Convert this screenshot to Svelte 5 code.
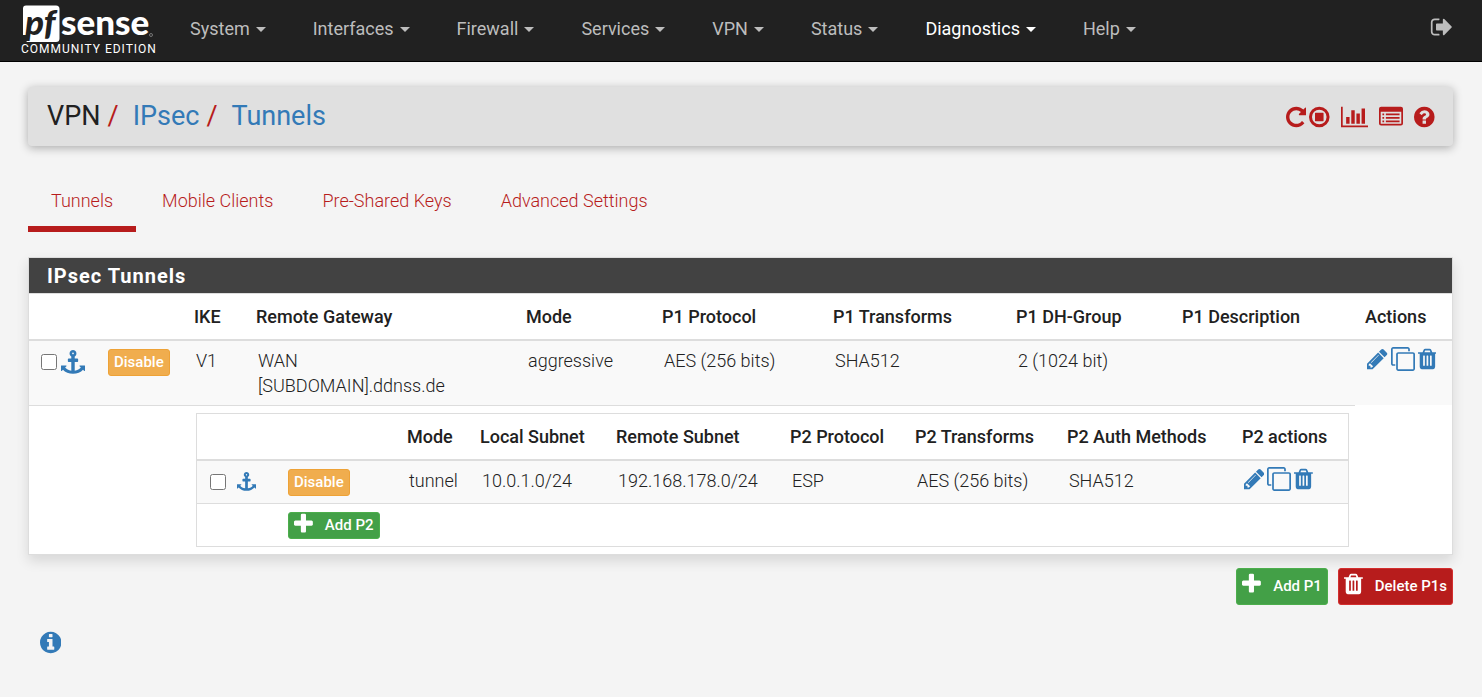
<script>
  const menus = ['System', 'Interfaces', 'Firewall', 'Services', 'VPN', 'Status', 'Diagnostics', 'Help'];
  const tabs = ['Tunnels', 'Mobile Clients', 'Pre-Shared Keys', 'Advanced Settings'];

  const p1Columns = [
    ['', 67], ['', 88], ['IKE', 62], ['Remote Gateway', 270], ['Mode', 136], ['P1 Protocol', 171],
    ['P1 Transforms', 183], ['P1 DH-Group', 166], ['P1 Description', 183], ['Actions', 97]
  ];
  const p2Columns = [
    ['', 79], ['', 121], ['Mode', 73], ['Local Subnet', 136], ['Remote Subnet', 174],
    ['P2 Protocol', 125], ['P2 Transforms', 152], ['P2 Auth Methods', 175], ['P2 actions', 116]
  ];
  const share = (columns, width) => (width / columns.reduce((sum, c) => sum + c[1], 0)) * 100;

  const disc = 'M1664 896q0 209-103 385.500t-279.500 279.500-385.500 103-385.500-103-279.500-279.500-103-385.500 103-385.500 279.500-279.500 385.500-103 385.500 103 279.500 279.500 103 385.500z';
  const icons = {
    pencil: ['128 0 1536 1792', 'M491 1536l91-91-235-235-91 91v107h128v128h107zm523-928q0-22-22-22-10 0-17 7l-542 542q-7 7-7 17 0 22 22 22 10 0 17-7l542-542q7-7 7-17zm-54-192l416 416-832 832h-416v-416zm683 96q0 53-37 90l-166 166-416-416 166-165q36-38 90-38 53 0 91 38l235 234q37 39 37 91z'],
    clone: ['0 0 1792 1792', 'M1664 1632v-1088q0-13-9.500-22.500t-22.500-9.500h-1088q-13 0-22.500 9.500t-9.500 22.500v1088q0 13 9.500 22.500t22.500 9.500h1088q13 0 22.500-9.500t9.500-22.500zm128-1088v1088q0 66-47 113t-113 47h-1088q-66 0-113-47t-47-113v-1088q0-66 47-113t113-47h1088q66 0 113 47t47 113zm-384-384v160h-128v-160q0-13-9.500-22.500t-22.500-9.500h-1088q-13 0-22.500 9.500t-9.500 22.500v1088q0 13 9.500 22.500t22.500 9.500h160v128h-160q-66 0-113-47t-47-113v-1088q0-66 47-113t113-47h1088q66 0 113 47t47 113z'],
    trash: ['192 0 1408 1792', 'M704 1376v-704q0-14-9-23t-23-9h-64q-14 0-23 9t-9 23v704q0 14 9 23t23 9h64q14 0 23-9t9-23zm256 0v-704q0-14-9-23t-23-9h-64q-14 0-23 9t-9 23v704q0 14 9 23t23 9h64q14 0 23-9t9-23zm256 0v-704q0-14-9-23t-23-9h-64q-14 0-23 9t-9 23v704q0 14 9 23t23 9h64q14 0 23-9t9-23zm-544-992h448l-48-117q-7-9-17-11h-317q-10 2-17 11zm928 32v64q0 14-9 23t-23 9h-96v948q0 83-47 143.500t-113 60.500h-832q-66 0-113-58.500t-47-141.500v-952h-96q-14 0-23-9t-9-23v-64q0-14 9-23t23-9h309l70-167q15-37 54-63t79-26h320q40 0 79 26t54 63l70 167h309q14 0 23 9t9 23z'],
    plus: ['192 0 1408 1792', 'M1600 736v192q0 40-28 68t-68 28h-416v416q0 40-28 68t-68 28h-192q-40 0-68-28t-28-68v-416h-416q-40 0-68-28t-28-68v-192q0-40 28-68t68-28h416v-416q0-40 28-68t68-28h192q40 0 68 28t28 68v416h416q40 0 68 28t28 68z'],
    anchor: ['0 0 1792 1792', 'M960 256q0-26-19-45t-45-19-45 19-19 45 19 45 45 19 45-19 19-45zm832 928v352q0 22-20 30-8 2-12 2-12 0-23-9l-93-93q-119 143-318.500 226.500t-429.500 83.500-429.500-83.500-318.500-226.500l-93 93q-9 9-23 9-4 0-12-2-20-8-20-30v-352q0-14 9-23t23-9h352q22 0 30 20 8 19-7 35l-100 100q67 91 189.500 153.500t271.500 82.500v-647h-192q-26 0-45-19t-19-45v-128q0-26 19-45t45-19h192v-163q-58-34-93-92.500t-35-128.500q0-106 75-181t181-75 181 75 75 181q0 70-35 128.500t-93 92.500v163h192q26 0 45 19t19 45v128q0 26-19 45t-45 19h-192v647q149-20 271.500-82.500t189.500-153.500l-100-100q-15-16-7-35 8-20 30-20h352q14 0 23 9t9 23z'],
    info: ['128 0 1536 1792', 'M1152 1376v-160q0-14-9-23t-23-9h-96v-512q0-14-9-23t-23-9h-320q-14 0-23 9t-9 23v160q0 14 9 23t23 9h96v320h-96q-14 0-23 9t-9 23v160q0 14 9 23t23 9h448q14 0 23-9t9-23zm-128-896v-160q0-14-9-23t-23-9h-192q-14 0-23 9t-9 23v160q0 14 9 23t23 9h192q14 0 23-9t9-23z' + disc],
    help: ['128 0 1536 1792', 'M1024 1376v-192q0-14-9-23t-23-9h-192q-14 0-23 9t-9 23v192q0 14 9 23t23 9h192q14 0 23-9t9-23zm256-672q0-88-55.500-163t-138.500-116-170-41q-243 0-371 213-15 24 8 42l132 100q7 6 19 6 16 0 25-12 53-68 86-92 34-24 86-24 48 0 85.500 26t37.500 59q0 38-20 61t-68 45q-63 28-115.500 86.500t-52.500 125.500v36q0 14 9 23t23 9h192q14 0 23-9t9-23q0-19 21.500-49.500t54.500-49.500q32-18 49-28.500t46-35 44.500-48 28-60.500 12.500-81z' + disc],
    repeat: ['128 0 1536 1792', 'M1664 256v448q0 26-19 45t-45 19h-448q-42 0-59-40-17-39 14-69l138-138q-148-137-349-137-104 0-198.500 40.500t-163.500 109.500-109.500 163.500-40.500 198.500 40.500 198.500 109.500 163.500 163.500 109.500 198.500 40.500q119 0 225-52t179-147q7-10 23-12 15 0 25 9l137 138q9 8 9.500 20.500t-7.500 22.500q-109 132-264 204.500t-327 72.500q-156 0-298-61t-245-164-164-245-61-298 61-298 164-245 245-164 298-61q147 0 284.500 55.500t244.500 156.500l130-129q29-31 70-14 39 17 39 59z'],
    stop: ['128 0 1536 1792', 'M608 576h576q32 0 32 32v576q0 32-32 32h-576q-32 0-32-32v-576q0-32 32-32zM896 352a544 544 0 1 0 0 1088a544 544 0 1 0 0-1088zM896 128a768 768 0 1 1 0 1536a768 768 0 1 1 0-1536z'],
    chart: ['0 0 2048 1792', 'M640 896v512h-256v-512h256zm384-512v1024h-256v-1024h256zm1024 1152v128h-2048v-1536h128v1408h1920zm-640-896v768h-256v-768h256zm384-384v1152h-256v-1152h256z'],
    list: ['0 0 1792 1792', 'M160 128h1472q160 0 160 160v1088q0 160-160 160h-1472q-160 0-160-160v-1088q0-160 160-160zM128 512v864q0 32 32 32h1472q32 0 32-32v-864zM256 640h128v128h-128zM512 640h1024v128h-1024zM256 896h128v128h-128zM512 896h1024v128h-1024zM256 1152h128v128h-128zM512 1152h1024v128h-1024z'],
    signout: ['0 0 1664 1792', 'M704 1440q0 4 1 20t.5 26.500-3 23.500-10 19.500-20.500 6.500h-320q-119 0-203.500-84.500t-84.500-203.500v-704q0-119 84.500-203.500t203.500-84.500h320q13 0 22.500 9.500t9.500 22.500q0 4 1 20t.5 26.500-3 23.500-10 19.500-20.500 6.500h-320q-66 0-113 47t-47 113v704q0 66 47 113t113 47h312l11.500 1 11.500 3 8 5.500 7 9 2 13.500zm928-544q0 26-19 45l-544 544q-19 19-45 19t-45-19-19-45v-288h-448q-26 0-45-19t-19-45v-384q0-26 19-45t45-19h448v-288q0-26 19-45t45-19 45 19l544 544q19 19 19 45z']
  };
</script>

{#snippet icon(name, size = '')}
  <svg class="icon {size}" viewBox={icons[name][0]} aria-hidden="true">
    <path fill="currentColor" fill-rule={name === 'list' ? 'evenodd' : 'nonzero'} d={icons[name][1]} />
  </svg>
{/snippet}

{#snippet head(columns)}
  <colgroup>
    {#each columns as column}<col style:width="{share(columns, column[1])}%" />{/each}
  </colgroup>
  <thead>
    <tr>{#each columns as column}<th>{column[0]}</th>{/each}</tr>
  </thead>
{/snippet}

{#snippet actions()}
  <div class="actions">
    <a href="#edit" aria-label="Edit">{@render icon('pencil')}</a>
    <a href="#copy" aria-label="Copy">{@render icon('clone')}</a>
    <a href="#delete" aria-label="Delete">{@render icon('trash')}</a>
  </div>
{/snippet}

<header class="navbar">
  <a class="brand" href="#home" aria-label="pfSense Community Edition">
    <svg class="logo" viewBox="0 0 132 38" aria-hidden="true">
      <path fill="#fff" d="M5 0.500H35Q38.500 0.500 38.500 4V33.500Q38.500 37 35 37H5.500L7 30L2 30V3.500Q2 0.500 5 0.500Z" />
      <text class="mark" x="4" y="30">pf</text>
      <text class="word" x="40" y="30">sense</text>
      <circle cx="130" cy="30" r="1.500" fill="none" stroke="#aaa" stroke-width="0.600" />
    </svg>
    <span class="edition">COMMUNITY EDITION</span>
  </a>
  <nav>
    {#each menus as menu}
      <a href="#{menu}" class:current={menu === 'Diagnostics'}>{menu}<span class="caret"></span></a>
    {/each}
  </nav>
  <a class="logout" href="#logout" aria-label="Logout">{@render icon('signout')}</a>
</header>

<main>
  <div class="titlebar">
    <h1>VPN<i>/</i><a href="#ipsec">IPsec</a><i>/</i><a href="#tunnels">Tunnels</a></h1>
    <div class="tools">
      <div class="pair">
        <a href="#restart" aria-label="Restart service">{@render icon('repeat')}</a>
        <a href="#stop" aria-label="Stop service">{@render icon('stop')}</a>
      </div>
      <a href="#status" aria-label="Status">{@render icon('chart')}</a>
      <a href="#logs" aria-label="Logs">{@render icon('list')}</a>
      <a href="#help" aria-label="Help">{@render icon('help')}</a>
    </div>
  </div>

  <nav class="tabs">
    {#each tabs as tab, i}
      <a href="#{tab}" class:active={i === 0}>{tab}</a>
    {/each}
  </nav>

  <section class="panel">
    <h2>IPsec Tunnels</h2>
    <table class="p1">
      {@render head(p1Columns)}
      <tbody>
        <tr class="striped">
          <td>
            <div class="pick">
              <input type="checkbox" aria-label="Select phase 1 entry" />
              <a href="#move" aria-label="Move checked entries here">{@render icon('anchor')}</a>
            </div>
          </td>
          <td><button class="btn warning">Disable</button></td>
          <td>V1</td>
          <td>WAN<br />[SUBDOMAIN].ddnss.de</td>
          <td>aggressive</td>
          <td>AES (256 bits)</td>
          <td>SHA512</td>
          <td>2 (1024 bit)</td>
          <td></td>
          <td class="tools-cell">{@render actions()}</td>
        </tr>
        <tr class="detail">
          <td colspan="2"></td>
          <td colspan="7" class="holder">
            <table class="p2">
              {@render head(p2Columns)}
              <tbody>
                <tr class="striped">
                  <td>
                    <div class="pick wide">
                      <input type="checkbox" aria-label="Select phase 2 entry" />
                      <a href="#move2" aria-label="Move checked entries here">{@render icon('anchor', 'small')}</a>
                    </div>
                  </td>
                  <td><button class="btn warning">Disable</button></td>
                  <td>tunnel</td>
                  <td>10.0.1.0/24</td>
                  <td>192.168.178.0/24</td>
                  <td>ESP</td>
                  <td>AES (256 bits)</td>
                  <td>SHA512</td>
                  <td class="tools-cell">{@render actions()}</td>
                </tr>
                <tr class="add">
                  <td></td>
                  <td colspan="8"><button class="btn success">{@render icon('plus')}Add P2</button></td>
                </tr>
              </tbody>
            </table>
          </td>
        </tr>
      </tbody>
    </table>
  </section>

  <div class="footer-actions">
    <button class="btn large success">{@render icon('plus')}Add P1</button>
    <button class="btn large danger">{@render icon('trash')}Delete P1s</button>
  </div>

  <a class="info" href="#info" aria-label="Information">{@render icon('info', 'big')}</a>
</main>

<style>
  :global(body) {
    background: #f4f4f4;
    color: #212121;
    font: 300 18px/25px Roboto, sans-serif;
  }
  a { color: #337ab7; text-decoration: none; }
  .icon { display: block; height: 24px; width: auto; }
  .icon.small { height: 19px; }
  .icon.big { height: 25px; }

  .navbar {
    display: flex;
    align-items: flex-start;
    height: 61px;
    padding: 0 30px 0 21px;
    background: #212121;
    border-bottom: 1px solid #000;
  }
  .brand { width: 133px; padding-top: 5px; margin-right: 13px; color: #fff; }
  .logo { display: block; width: 132px; height: 38px; overflow: visible; }
  .mark { font: italic 900 35px/40px Lato, sans-serif; fill: #212121; }
  .word { font: 900 35px/40px Lato, sans-serif; fill: #fff; }
  .edition {
    display: block;
    font-size: 12px;
    font-weight: 400;
    line-height: 12px;
    letter-spacing: 1px;
    white-space: nowrap;
  }
  .navbar nav { display: flex; flex: 1; }
  .navbar nav a {
    display: flex;
    align-items: center;
    gap: 6px;
    padding: 16px 24px 20px 23px;
    color: #bdbdbd;
    font-weight: 400;
  }
  .navbar nav a.current { color: #fff; }
  .caret {
    border: 5px solid transparent;
    border-top-color: currentColor;
    border-bottom: 0;
    margin-top: 2px;
  }
  .logout { padding-top: 15px; color: #bdbdbd; }

  main { padding: 25px 29px 40px 28px; }
  .titlebar {
    display: flex;
    justify-content: space-between;
    align-items: center;
    padding: 13px 18px 13px 19px;
    background: #e0e0e0;
    border-radius: 4px;
    box-shadow: 0 2px 10px rgba(0, 0, 0, 0.3);
  }
  h1 { margin: 0; font-size: 27px; font-weight: 400; line-height: 33px; }
  h1 i { font-style: normal; color: #b71c1c; margin: 0 14px 0 7px; }
  .tools, .pair { display: flex; }
  .tools { gap: 11px; }
  .pair { gap: 3px; }
  .tools a { color: #b71c1c; }

  .tabs { display: flex; gap: 3px; margin: 38px 0 25px; }
  .tabs a {
    padding: 4px 23px 13px;
    color: #b71c1c;
    border-bottom: 6px solid transparent;
  }
  .tabs a.active { border-color: #b71c1c; }

  .panel {
    background: #fff;
    border: 1px solid #ddd;
    box-shadow: 0 6px 12px rgba(0, 0, 0, 0.12);
  }
  h2 {
    margin: 0;
    padding: 6px 18px 4px;
    background: #424242;
    color: #fff;
    font-size: 20px;
    font-weight: 700;
    line-height: 25px;
    letter-spacing: 1px;
  }
  table { width: 100%; table-layout: fixed; border-collapse: separate; border-spacing: 0; }
  .p1 { border-top: 1px solid #ddd; }
  .p2 { border: 1px solid #ddd; }
  th {
    padding: 10px 0 10px 10px;
    border-bottom: 2px solid #ddd;
    font-weight: 500;
    text-align: left;
    white-space: nowrap;
  }
  td { padding: 7px 0 7px 12px; vertical-align: top; }
  .p2 td { padding-bottom: 8px; }
  .striped > td { background: #f9f9f9; }
  td.tools-cell { padding-top: 6px; }
  .detail > td, .add > td { border-top: 1px solid #ddd; }
  td.holder { padding: 7px 6px 7px 12px; }
  .pick { display: flex; align-items: center; gap: 4px; min-height: 27px; }
  .pick.wide { gap: 11px; padding-left: 1px; }
  .p2 .pick { margin-bottom: -1px; }
  input { width: 16px; height: 16px; margin: 0; }
  .actions { display: flex; gap: 3px; }

  .btn {
    display: flex;
    align-items: center;
    gap: 12px;
    height: 27px;
    margin-top: 1px;
    padding: 0 5px 1px;
    border: 1px solid;
    border-radius: 3px;
    color: #fff;
    font: 500 15px/22px Roboto, sans-serif;
    white-space: nowrap;
  }
  .p2 .btn { margin-bottom: -1px; }
  .btn .icon { margin-bottom: 3px; }
  .btn.large { height: 37px; padding-bottom: 2px; }
  .warning { background: #f0ad4e; border-color: #eea236; }
  .success { background: #43a047; border-color: #4cae4c; }
  .danger { background: #b71c1c; border-color: #d32f2f; }
  .footer-actions { display: flex; justify-content: flex-end; gap: 10px; margin-top: 12px; }
  .info { display: block; width: 22px; margin: 25px 0 0 12px; }
</style>
